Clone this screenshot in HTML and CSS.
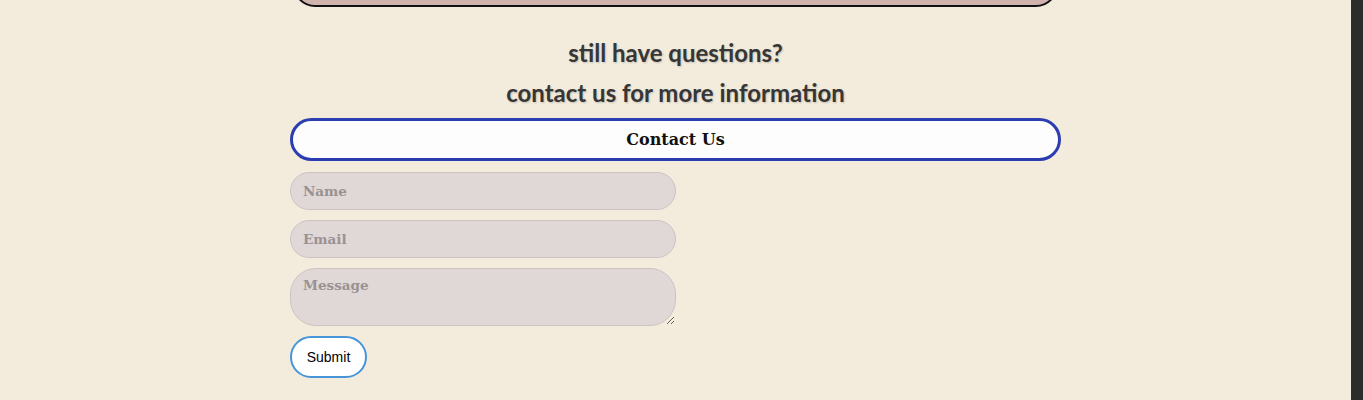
FILE: index.html
```html
<!DOCTYPE html>
<html lang="en">
<head>
<meta charset="utf-8">
<title>Contact</title>
<link rel="stylesheet" href="styles.css">
</head>
<body>
<div class="page">
  <main class="content">
    <div class="column">
      <div class="top-card"></div>
      <h2 class="lead">still have questions?</h2>
      <h2 class="lead">contact us for more information</h2>
      <div class="contact-title">Contact Us</div>
      <form class="contact-form">
        <input class="field" type="text" placeholder="Name">
        <input class="field" type="email" placeholder="Email">
        <textarea class="field area" placeholder="Message"></textarea>
        <button class="submit" type="button">Submit</button>
      </form>
    </div>
  </main>
  <div class="scrollbar"></div>
</div>
</body>
</html>
```

FILE: styles.css
```css
html, body {
  margin: 0;
  padding: 0;
  height: 100%;
  overflow: hidden;
}
body {
  background: #f3ecdd;
  font-family: "Liberation Sans", Arial, sans-serif;
}
.page {
  display: flex;
  height: 400px;
}
.content {
  flex: 1;
  overflow: hidden;
}
.scrollbar {
  width: 12px;
  background: #2b2d2b;
}
.column {
  width: 771px;
  margin: 0 auto;
  display: flex;
  flex-direction: column;
  align-items: stretch;
}
.top-card {
  height: 40px;
  margin: -33px 3px 0 3px;
  background: #cfb3ac;
  border: 2px solid #111;
  border-radius: 0 0 22px 22px;
  box-sizing: border-box;
}
.lead {
  margin: 0;
  text-align: center;
  font-family: "Lato", "Open Sans", sans-serif;
  font-weight: 700;
  font-size: 24px;
  line-height: 40px;
  color: #363636;
  text-shadow: 1px 1px 2px rgba(0, 0, 0, 0.18);
}
.lead:first-of-type {
  margin-top: 26px;
}
.contact-title {
  margin-top: 5px;
  height: 43px;
  box-sizing: border-box;
  border: 3px solid #2b3db0;
  border-radius: 22px;
  background: #fdfdfd;
  display: flex;
  align-items: center;
  justify-content: center;
  font-family: "DejaVu Serif", "Liberation Serif", serif;
  font-weight: 700;
  font-size: 16px;
  color: #111;
}
.contact-form {
  margin-top: 11px;
  display: flex;
  flex-direction: column;
  align-items: flex-start;
  gap: 10px;
}
.field {
  width: 386px;
  height: 38px;
  box-sizing: border-box;
  border: 1px solid #cdc3c3;
  border-radius: 19px;
  background: #e0d7d7;
  padding: 0 12px;
  font-family: "DejaVu Serif", "Liberation Serif", serif;
  font-size: 13.5px;
  font-weight: 700;
  color: #333;
  outline: none;
}
.field::placeholder {
  color: #999292;
  font-weight: 700;
}
.area {
  height: 58px;
  border-radius: 26px;
  padding-top: 8px;
  resize: vertical;
}
.submit {
  width: 77px;
  height: 42px;
  box-sizing: border-box;
  border: 2px solid #4795d8;
  border-radius: 21px;
  background: #ffffff;
  font-family: "Liberation Sans", Arial, sans-serif;
  font-size: 14px;
  color: #000;
  padding: 0;
}
```
